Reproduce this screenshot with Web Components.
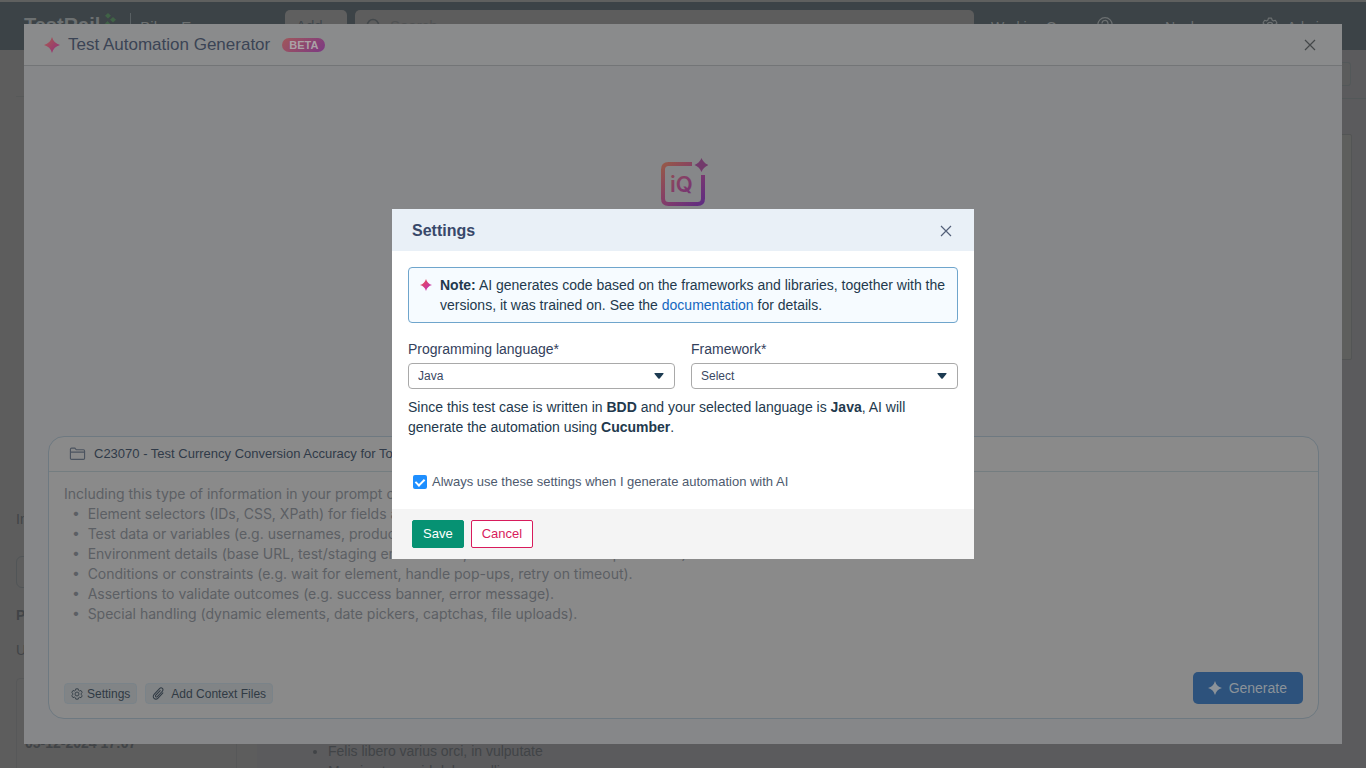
<!DOCTYPE html>
<html lang="en">
<head>
<meta charset="utf-8">
<meta name="viewport" content="width=device-width, initial-scale=1">
<title>Test Automation Generator</title>
<style>
  body {
    margin: 0;
    background: #5d5d5d;
    color: #23394d;
    font: 14px/20px "Liberation Sans", Arial, sans-serif;
  }
</style>
</head>
<body>
<case-page></case-page>
<generator-dialog heading="Test Automation Generator" badge="BETA">
  <prompt-card case-title="C23070 - Test Currency Conversion Accuracy for Top Currencies"></prompt-card>
</generator-dialog>
<settings-modal heading="Settings">
  <info-note>
    <b>Note:</b> AI generates code based on the frameworks and libraries, together with the versions, it was trained on. See the <a href="#">documentation</a> for details.
  </info-note>
  <form-select slot="field" label="Programming language*" options="Java,Python,JavaScript"></form-select>
  <form-select slot="field" label="Framework*" options="Select,Cucumber,JUnit"></form-select>
  <span slot="hint">Since this test case is written in <b>BDD</b> and your selected language is <b>Java</b>, AI will generate the automation using <b>Cucumber</b>.</span>
</settings-modal>

<script>
const ICONS = {
  close: '<svg viewBox="0 0 12 12" fill="none" stroke="currentColor" stroke-width="1.2"><path d="M1 1l10 10M11 1L1 11"/></svg>',
  sparkle: '<svg viewBox="0 0 16 16" fill="currentColor"><path d="M8 0q1.700 6.300 8 8q-6.300 1.700-8 8q-1.700-6.300-8-8q6.300-1.700 8-8z"/></svg>',
  gradient: '<svg viewBox="0 0 16 16"><defs><linearGradient id="g" x1="0" y1="0" x2="1" y2="1"><stop offset="0.2" stop-color="var(--from)"/><stop offset="0.8" stop-color="var(--to)"/></linearGradient></defs><path fill="url(#g)" d="M8 0q1.700 6.300 8 8q-6.300 1.700-8 8q-1.700-6.300-8-8q6.300-1.700 8-8z"/></svg>',
  folder: '<svg viewBox="0 0 18 14" fill="none" stroke="currentColor" stroke-width="1.200"><path d="M1.500 12V2q0-1.200 1.200-1.200h3.500l1.500 1.700h7.600q1.200 0 1.200 1.200V11.500q0 1.200-1.200 1.200H2.700q-1.200 0-1.200-1.200M1.500 5h15"/></svg>',
  clip: '<svg viewBox="0 0 14 14" fill="none" stroke="currentColor" stroke-width="1.100" stroke-linecap="round"><path d="M11.700 6.300L6.500 11.900c-1.300 1.300-3.100 1.400-4.300.3s-1.100-3 .1-4.300L8.100 1.700c.9-.9 2.200-1 3.100-.2s.8 2.200-.1 3.100L5.700 10.300c-.5.5-1.200.6-1.700.1s-.4-1.200.1-1.700L8.800 3.800"/></svg>',
  gear: '<svg viewBox="0 0 14 14" fill="none" stroke="currentColor" stroke-linejoin="round"><path d="M5.600 1h2.800l.4 1.700 1.200.7 1.700-.5 1.400 2.400-1.300 1.200v1.200l1.300 1.200-1.400 2.400-1.700-.5-1.200.7L8.400 13H5.600l-.4-1.600-1.200-.7-1.700.5-1.400-2.400 1.300-1.200V6.500L.9 5.300l1.400-2.400 1.700.5 1.200-.7z"/><circle cx="7" cy="7" r="2.300"/></svg>',
  search: '<svg viewBox="0 0 16 16" fill="none" stroke="currentColor" stroke-width="1.500"><circle cx="7" cy="7" r="5.500"/><path d="M11 11l4 4"/></svg>',
  chevron: '<svg viewBox="0 0 12 12" fill="none" stroke="currentColor"><path d="M2 4l4 4 4-4"/></svg>',
  help: '<svg viewBox="0 0 16 16" fill="none" stroke="currentColor" stroke-width="1.200"><circle cx="8" cy="8" r="7.300"/><path d="M5 6.500a3 3 0 1 1 4 2.800L8 11"/></svg>',
  caret: '<svg viewBox="0 0 10 6" fill="currentColor"><path d="M1 0h8q1 0 .4.900L5.700 5.400q-.7.800-1.400 0L.6.900Q0 0 1 0z"/></svg>',
  leaves: '<svg viewBox="0 0 14 14" fill="#406246"><path d="M4 0l3 2.800-3 2.800-3-2.800zM9 4l3 2.800-3 2.800-3-2.800zM3.500 8l2.500 2.500L3.500 13 1 10.500z"/></svg>'
};

function render(el, css, html) {
  el.attachShadow({ mode: 'open' }).innerHTML = `<style>* { box-sizing: border-box; } ${css}</style>${html}`;
}

class AppIcon extends HTMLElement {
  connectedCallback() {
    render(this, `
      :host { display: inline-block; width: 16px; height: 16px; flex: none; }
      svg { display: block; width: 100%; height: 100%; }
    `, ICONS[this.getAttribute('name')]);
  }
}

class SiteHeader extends HTMLElement {
  connectedCallback() {
    render(this, `
      :host { display: flex; flex: none; height: 50px; padding: 0 24px; border-top: 2px solid #5f605f; background: #3c4347; color: #6c7071; }
      .brand { display: flex; gap: 4px; width: 261px; padding-top: 11px; }
      .name { font-size: 20px; line-height: 24px; font-weight: bold; }
      .brand app-icon { width: 14px; height: 14px; }
      .project { height: 28px; margin-left: 8px; padding-left: 9px; border-left: 1px solid #596063; font-size: 15px; line-height: 28px; }
      button { display: flex; gap: 8px; width: 62px; height: 30px; margin: 8px 8px 0 0; padding: 7px 11px 0; border: 0; border-radius: 5px; background: #5f5f5f; color: #3f474c; font: 15px/18px "Liberation Sans", Arial, sans-serif; }
      button app-icon { width: 12px; height: 18px; }
      .search { display: flex; gap: 8px; flex: 1; height: 30px; margin-top: 8px; padding: 8px 11px 0; border-radius: 5px; background: #5d5d5d; color: #44494c; }
      input { flex: 1; height: 14px; padding: 0; border: 0; background: none; font: 15px/14px "Liberation Sans", Arial, sans-serif; }
      input::placeholder { color: #505253; }
      nav { display: flex; width: 368px; padding: 15px 0 0 17px; font-size: 14px; line-height: 20px; }
      nav a { display: flex; flex: none; gap: 9px; width: 106px; color: inherit; text-decoration: none; white-space: nowrap; }
      nav a.help { width: 68px; }
      nav a.user { width: 97px; }
      nav a.admin { width: 80px; }
    `, `
      <div class="brand"><span class="name">TestRail</span><app-icon name="leaves"></app-icon><span class="project">Bikes E</span></div>
      <button>Add <app-icon name="chevron"></app-icon></button>
      <label class="search"><app-icon name="search"></app-icon><input placeholder="Search" aria-label="Search"></label>
      <nav>
        <a href="#">Working On</a>
        <a href="#" class="help" aria-label="Help"><app-icon name="help"></app-icon></a>
        <a href="#" class="user">Neela</a>
        <a href="#" class="admin"><app-icon name="gear"></app-icon>Admin</a>
      </nav>
    `);
  }
}

class CasePage extends HTMLElement {
  connectedCallback() {
    render(this, `
      :host { display: flex; flex-direction: column; height: 100vh; overflow: hidden; color: #414447; }
      main { display: flex; flex: 1; min-height: 0; }
      .side { width: 257px; padding: 46px 20px 0 16px; }
      .side .top { height: 413px; border-top: 1px solid #575959; }
      .side p { margin: 0; }
      .box { height: 32px; margin: 27px 0 17px; border: 1px solid #515557; border-radius: 6px; }
      .side .owner { margin: 15px 0 18px; }
      .card { height: 200px; padding: 54px 8px; border: 1px solid #575859; border-radius: 4px; }
      .content { flex: 1; background: #5b5b5d; }
      .bar { display: flex; justify-content: flex-end; height: 49px; padding: 12px 15px; border-bottom: 1px solid #535859; }
      .bar button { width: 120px; border: 1px solid #535859; border-radius: 3px; background: #5b5c5c; }
      .panel { height: 226px; margin: 35px 14px 381px 16px; border: 1px solid #535555; border-radius: 2px; background: #5e5f5d; }
      ul { margin: 0; padding-left: 71px; }
    `, `
      <site-header></site-header>
      <main>
        <div class="side">
          <div class="top"></div>
          <p>In</p>
          <div class="box"></div>
          <p><b>P</b></p>
          <p class="owner">U</p>
          <div class="card"><b>05-12-2024 17:07</b></div>
        </div>
        <div class="content">
          <div class="bar"><button aria-label="More"></button></div>
          <div class="panel"></div>
          <ul><li>Felis libero varius orci, in vulputate</li><li>Mauris et urna id dolor mollis</li></ul>
        </div>
      </main>
    `);
  }
}

class IqLogo extends HTMLElement {
  connectedCallback() {
    render(this, `
      :host { display: block; width: 50px; height: 50px; }
      svg { display: block; }
      text { font: 600 22px Inter, sans-serif; }
    `, `
      <svg width="50" height="50" viewBox="0 0 50 50">
        <defs>
          <linearGradient id="iq" gradientUnits="userSpaceOnUse" x1="3" y1="6" x2="45" y2="48">
            <stop offset="0" stop-color="#975b46"/><stop offset="0.5" stop-color="#833c69"/><stop offset="1" stop-color="#5f2c82"/>
          </linearGradient>
        </defs>
        <path d="M34 7H10.500Q5 7 5 12.500V41.500Q5 47 10.500 47H39.500Q45 47 45 41.500V18" fill="none" stroke="url(#iq)" stroke-width="4"/>
        <path d="M43.500 1q1.900 5.100 7 7q-5.100 1.900-7 7q-1.900-5.100-7-7q5.100-1.900 7-7z" fill="#723a6b"/>
        <text x="12" y="35" fill="url(#iq)">iQ</text>
      </svg>
    `);
  }
}

class GeneratorDialog extends HTMLElement {
  connectedCallback() {
    render(this, `
      :host { position: fixed; inset: 24px; display: flex; flex-direction: column; background: #868789; }
      header { display: flex; align-items: center; height: 42px; padding: 0 26px 0 20px; border-bottom: 1px solid #737577; background: #8a8b8c; }
      header app-icon { --from: #a45358; --to: #963873; }
      h1 { margin: 0 12px 0 8px; color: #3b4455; font-size: 17px; line-height: 24px; font-weight: normal; }
      .badge { padding: 0 7px; border-radius: 7px; background: linear-gradient(135deg, #a0575a, #7c3983); color: #aaa2a6; font-size: 11px; line-height: 14px; font-weight: bold; }
      button { display: flex; margin-left: auto; padding: 0; border: 0; background: none; color: #444749; }
      button app-icon { width: 12px; height: 12px; }
      .hero { display: flex; flex: 1; justify-content: center; padding-top: 91px; }
      ::slotted(*) { margin: 0 23px 25px 24px; }
    `, `
      <header>
        <app-icon name="gradient"></app-icon>
        <h1>${this.getAttribute('heading')}</h1>
        <span class="badge">${this.getAttribute('badge')}</span>
        <button aria-label="Close"><app-icon name="close"></app-icon></button>
      </header>
      <div class="hero"><iq-logo></iq-logo></div>
      <slot></slot>
    `);
  }
}

class PromptCard extends HTMLElement {
  connectedCallback() {
    const lines = [
      'Including this type of information in your prompt can improve the results:',
      '  •  Element selectors (IDs, CSS, XPath) for fields and buttons.',
      '  •  Test data or variables (e.g. usernames, product IDs).',
      '  •  Environment details (base URL, test/staging environment, browser or device requirements).',
      '  •  Conditions or constraints (e.g. wait for element, handle pop-ups, retry on timeout).',
      '  •  Assertions to validate outcomes (e.g. success banner, error message).',
      '  •  Special handling (dynamic elements, date pickers, captchas, file uploads).'
    ];
    render(this, `
      :host { display: block; border: 1px solid #6e7981; border-radius: 16px; background: #8a8a8a; overflow: hidden; }
      .title { display: flex; align-items: center; gap: 8px; height: 35px; padding: 0 20px; border-bottom: 1px solid #747d80; color: #303a48; font-size: 13px; }
      .title app-icon { width: 17px; height: 14px; color: #4b535f; }
      textarea { display: block; width: 100%; height: 188px; padding: 12px 15px; border: 0; outline: 0; resize: none; background: none; font: 14px/20px Inter, sans-serif; }
      textarea::placeholder { color: #5c5f64; }
      .actions { display: flex; align-items: flex-end; gap: 8px; padding: 12px 15px 14px; }
      button { display: flex; align-items: center; border: 1px solid #7a8389; border-radius: 4px; background: #818486; color: #303a44; font: 12px/18px "Liberation Sans", Arial, sans-serif; height: 21px; padding: 0 6px; gap: 4px; }
      button app-icon { width: 12px; height: 12px; }
      .attach { gap: 6px; }
      .attach app-icon { width: 13px; height: 13px; }
      .generate { height: 32px; margin-left: auto; padding: 0 16px 0 15px; border: 0; border-radius: 5px; gap: 7px; background: #2d527c; color: #8b9299; font-size: 14px; }
      .generate app-icon { width: 14px; height: 14px; }
    `, `
      <div class="title"><app-icon name="folder"></app-icon>${this.getAttribute('case-title')}</div>
      <textarea aria-label="Prompt" placeholder="${lines.join('\n')}"></textarea>
      <div class="actions">
        <button><app-icon name="gear"></app-icon>Settings</button>
        <button class="attach"><app-icon name="clip"></app-icon>Add Context Files</button>
        <button class="generate"><app-icon name="sparkle"></app-icon>Generate</button>
      </div>
    `);
  }
}

class InfoNote extends HTMLElement {
  connectedCallback() {
    render(this, `
      :host { display: flex; gap: 8px; padding: 7px 11px; border: 1px solid #6fa5cc; border-radius: 4px; background: #f6fbff; }
      app-icon { width: 12px; height: 12px; margin-top: 4px; --from: #e6485a; --to: #c334b0; }
      ::slotted(a) { color: #1467c0; text-decoration: none; }
    `, `<app-icon name="gradient"></app-icon><div><slot></slot></div>`);
  }
}

class FormSelect extends HTMLElement {
  connectedCallback() {
    const options = this.getAttribute('options').split(',').map(o => `<option>${o}</option>`).join('');
    render(this, `
      :host { display: block; flex: 1; }
      label { display: block; margin-bottom: 4px; color: #33415c; }
      .control { display: grid; grid-template-columns: 1fr auto; align-items: center; }
      select { grid-area: 1 / 1 / 2 / 3; width: 100%; height: 26px; padding: 0 9px; border: 1px solid #a9a9a9; border-radius: 4px; appearance: none; background: #fff; color: #3a4863; font: 12px/18px "Liberation Sans", Arial, sans-serif; }
      app-icon { grid-area: 1 / 2; width: 10px; height: 6px; margin-right: 11px; color: #1d3b52; pointer-events: none; }
    `, `
      <label for="s">${this.getAttribute('label')}</label>
      <div class="control"><select id="s">${options}</select><app-icon name="caret"></app-icon></div>
    `);
  }
}

class SettingsModal extends HTMLElement {
  connectedCallback() {
    render(this, `
      :host { position: fixed; inset: 0; display: grid; place-items: center; }
      .modal { width: 582px; max-width: 100%; background: #fff; }
      header { display: flex; align-items: center; justify-content: space-between; height: 42px; padding: 2px 22px 0 20px; background: #e9f0f7; }
      h2 { margin: 0; color: #38486a; font-size: 16px; line-height: 24px; }
      header button { display: flex; padding: 0; border: 0; background: none; color: #536079; }
      header app-icon { width: 12px; height: 12px; }
      .body { padding: 16px 16px 17px; }
      .fields { display: flex; gap: 16px; margin: 16px 0 8px; }
      .hint { margin: 0; }
      .always { display: flex; align-items: center; gap: 5px; margin: 35px 0 0 5px; color: #4d5a6e; font-size: 13px; }
      .always input { display: grid; place-items: center; width: 14px; height: 14px; margin: 0; appearance: none; border-radius: 2px; background: #1e8fff; }
      .always input:checked::after { content: ""; width: 4px; height: 7px; margin-bottom: 2px; border: solid #fff; border-width: 0 2px 2px 0; transform: rotate(45deg); }
      footer { display: flex; gap: 7px; padding: 11px 20px; background: #f4f4f4; }
      footer button { height: 28px; padding: 0 10px; border: 1px solid #d81b5c; border-radius: 2px; background: #fff; color: #d81b5c; font: 13px/18px "Liberation Sans", Arial, sans-serif; }
      footer .save { border-color: #069273; background: #069273; color: #fff; }
    `, `
      <div class="modal" role="dialog" aria-labelledby="title">
        <header><h2 id="title">${this.getAttribute('heading')}</h2><button aria-label="Close"><app-icon name="close"></app-icon></button></header>
        <div class="body">
          <slot></slot>
          <div class="fields"><slot name="field"></slot></div>
          <p class="hint"><slot name="hint"></slot></p>
          <label class="always"><input type="checkbox" checked>Always use these settings when I generate automation with AI</label>
        </div>
        <footer><button class="save">Save</button><button>Cancel</button></footer>
      </div>
    `);
  }
}

customElements.define('app-icon', AppIcon);
customElements.define('site-header', SiteHeader);
customElements.define('case-page', CasePage);
customElements.define('iq-logo', IqLogo);
customElements.define('generator-dialog', GeneratorDialog);
customElements.define('prompt-card', PromptCard);
customElements.define('info-note', InfoNote);
customElements.define('form-select', FormSelect);
customElements.define('settings-modal', SettingsModal);
</script>
</body>
</html>
